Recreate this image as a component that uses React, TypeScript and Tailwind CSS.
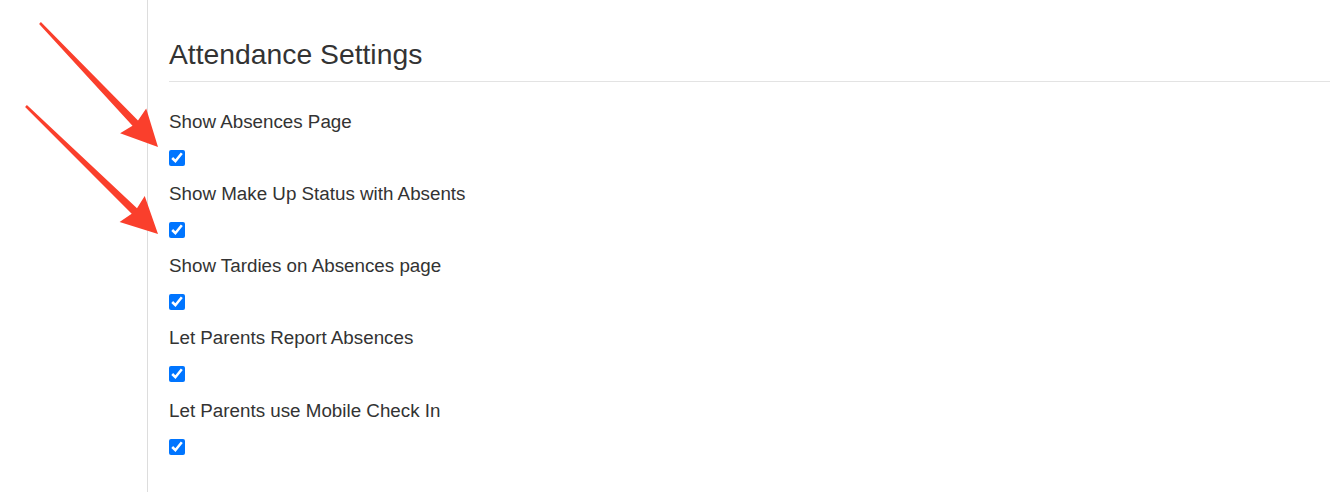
import React from "react";

const settings = [
  "Show Absences Page",
  "Show Make Up Status with Absents",
  "Show Tardies on Absences page",
  "Let Parents Report Absences",
  "Let Parents use Mobile Check In",
];

type Pt = [number, number];

// tapered red arrow: thin tail, wide head
function arrowPoints(tail: Pt, tip: Pt, headLen: number, headHalf: number) {
  const dx = tip[0] - tail[0];
  const dy = tip[1] - tail[1];
  const len = Math.hypot(dx, dy);
  const ux = dx / len;
  const uy = dy / len;
  const nx = -uy;
  const ny = ux;
  const bx = tip[0] - ux * headLen;
  const by = tip[1] - uy * headLen;
  // small notch so the head looks barbed
  const nbx = bx + ux * 3;
  const nby = by + uy * 3;
  const pts: Pt[] = [
    [tail[0] + nx * 1.3, tail[1] + ny * 1.3],
    [nbx + nx * 3.8, nby + ny * 3.8],
    [bx + nx * headHalf, by + ny * headHalf],
    tip,
    [bx - nx * headHalf, by - ny * headHalf],
    [nbx - nx * 3.8, nby - ny * 3.8],
    [tail[0] - nx * 1.3, tail[1] - ny * 1.3],
  ];
  return pts.map((p) => p.map((v) => v.toFixed(1)).join(",")).join(" ");
}

function Arrows() {
  return (
    <svg
      className="absolute left-0 top-0 pointer-events-none"
      width="170"
      height="250"
      viewBox="0 0 170 250"
    >
      <polygon points={arrowPoints([40, 23], [158, 147], 36, 18)} fill="#fa3f2c" />
      <polygon points={arrowPoints([26, 106], [158, 234], 36, 18)} fill="#fa3f2c" />
    </svg>
  );
}

export default function App() {
  return (
    <div
      className="relative flex h-screen w-full bg-white text-[#333]"
      style={{ fontFamily: '"Liberation Sans", Arial, sans-serif' }}
    >
      <div className="w-[148px] shrink-0 border-r border-[#dddddd]" />

      <div className="flex-1 pl-[21px]">
        <h2 className="mt-[39px] border-b border-[#e3e3e3] pb-[11px] text-[28.3px] leading-[31px] font-normal">
          Attendance Settings
        </h2>

        <div className="mt-[26.6px] flex flex-col">
          {settings.map((label) => (
            <div key={label} className="h-[72.25px]">
              <div className="h-[26px] text-[18.8px] leading-[26px]">{label}</div>
              <input
                type="checkbox"
                defaultChecked
                className="mt-[15px] block h-[16px] w-[16px] m-0 accent-[#0075ff]"
              />
            </div>
          ))}
        </div>
      </div>

      <Arrows />
    </div>
  );
}
